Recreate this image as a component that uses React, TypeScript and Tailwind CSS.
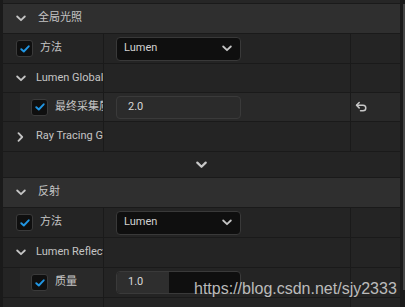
import React from "react";

const font = { fontFamily: 'Roboto, "Noto Sans CJK SC", "Noto Sans", sans-serif' };

function ChevronDown({ className = "" }: { className?: string }) {
  return (
    <svg width="10" height="7" viewBox="0 0 10 7" className={`shrink-0 ${className}`}>
      <path d="M1.2 1.5 L5 5.2 L8.8 1.5" fill="none" stroke="#c4c4c4" strokeWidth="1.8" strokeLinecap="round" strokeLinejoin="round" />
    </svg>
  );
}

function ChevronRight() {
  return (
    <svg width="7" height="10" viewBox="0 0 7 10" className="shrink-0">
      <path d="M1.5 1.2 L5.2 5 L1.5 8.8" fill="none" stroke="#c4c4c4" strokeWidth="1.8" strokeLinecap="round" strokeLinejoin="round" />
    </svg>
  );
}

function Checkbox() {
  return (
    <div className="flex h-[17px] w-[17px] shrink-0 items-center justify-center rounded-[3px] border border-[#3a3a3a] bg-[#0f0f0f]">
      <svg width="10" height="8" viewBox="0 0 10 8" className="shrink-0">
        <path d="M1.3 4.2 L3.8 6.5 L8.7 1.3" fill="none" stroke="#2196e3" strokeWidth="1.9" strokeLinecap="round" strokeLinejoin="round" />
      </svg>
    </div>
  );
}

function Dropdown() {
  return (
    <div className="flex h-[24px] w-[125px] items-center justify-between rounded-[4px] border border-[#393939] bg-[#0f0f0f] pl-[7px] pr-[8px] text-[11px] text-[#d2d2d2]">
      <span>Lumen</span>
      <ChevronDown />
    </div>
  );
}

function Header({ label }: { label: string }) {
  return (
    <div className="flex h-[30px] shrink-0 items-center border-b border-[#1a1a1a] bg-[#2f2f2f] pl-[13px] text-[11px] text-[#c4c4c4]">
      <ChevronDown />
      <span className="ml-[12px]">{label}</span>
    </div>
  );
}

function Row({
  h = "h-[30px]",
  name,
  value,
  right,
  bg = "bg-[#242424]",
  valueBg = "bg-[#242424]",
}: {
  h?: string;
  name: React.ReactNode;
  value?: React.ReactNode;
  right?: React.ReactNode;
  bg?: string;
  valueBg?: string;
}) {
  return (
    <div className={`flex ${h} shrink-0 border-b border-[#1a1a1a]`}>
      <div className={`flex w-[101px] shrink-0 items-center overflow-hidden whitespace-nowrap border-r border-[#1a1a1a] ${bg} text-[11px] text-[#c4c4c4]`}>
        {name}
      </div>
      <div className={`flex w-[247px] shrink-0 items-center border-r border-[#1a1a1a] pl-[12px] ${valueBg}`}>{value}</div>
      <div className={`flex flex-1 items-center pl-[4px] ${valueBg}`}>{right}</div>
    </div>
  );
}

function RevertIcon() {
  return (
    <svg width="13" height="12" viewBox="0 0 13 12" className="shrink-0">
      <path d="M4.2 1.5 L1.5 4.2 L4.2 6.9" fill="none" stroke="#c8c8c8" strokeWidth="1.5" strokeLinecap="round" strokeLinejoin="round" />
      <path d="M1.8 4.2 H8 a2.8 2.8 0 0 1 0 5.6 H5.5" fill="none" stroke="#c8c8c8" strokeWidth="1.5" strokeLinecap="round" strokeLinejoin="round" />
    </svg>
  );
}

export default function App() {
  return (
    <div className="relative flex h-[307px] w-[405px] overflow-hidden bg-[#1a1a1a]" style={font}>
      <div className="flex w-[400px] flex-col pl-[3px]">
        <div className="h-[4px] shrink-0 border-b border-[#1a1a1a] bg-[#262626]" />
        <Header label="全局光照" />
        <Row
          name={
            <div className="flex shrink-0 items-center pl-[13px]">
              <Checkbox />
              <span className="ml-[7px]">方法</span>
            </div>
          }
          value={<Dropdown />}
        />
        <Row
          h="h-[29px]"
          name={
            <div className="flex shrink-0 items-center pl-[13px]">
              <ChevronDown />
              <span className="ml-[10px]">Lumen Global Illumination</span>
            </div>
          }
        />
        <Row
          h="h-[29px]"
          bg="bg-[#242424]"
          valueBg="bg-[#292929]"
          name={
            <div className="flex h-full w-full shrink-0 items-center">
              <div className="h-full w-[17px] shrink-0 bg-[#242424]" />
              <div className="flex h-full flex-1 shrink-0 items-center bg-[#292929] pl-[11px]">
                <Checkbox />
                <span className="ml-[7px]">最终采集质量</span>
              </div>
            </div>
          }
          value={
            <div className="flex h-[23px] w-[125px] items-center rounded-[4px] border border-[#3a3a3a] bg-[#2b2b2b] pl-[11px] text-[11px] text-[#d8d8d8]">
              2.0
            </div>
          }
          right={<RevertIcon />}
        />
        <Row
          name={
            <div className="flex shrink-0 items-center pl-[14px]">
              <ChevronRight />
              <span className="ml-[12px]">Ray Tracing GI</span>
            </div>
          }
        />
        <div className="flex h-[26px] shrink-0 items-center justify-center border-b border-[#1a1a1a] bg-[#242424]">
          <svg width="11" height="8" viewBox="0 0 11 8" className="shrink-0">
            <path d="M1.3 1.6 L5.5 5.8 L9.7 1.6" fill="none" stroke="#c8c8c8" strokeWidth="2.2" strokeLinecap="round" strokeLinejoin="round" />
          </svg>
        </div>
        <Header label="反射" />
        <Row
          name={
            <div className="flex shrink-0 items-center pl-[13px]">
              <Checkbox />
              <span className="ml-[7px]">方法</span>
            </div>
          }
          value={<Dropdown />}
        />
        <Row
          name={
            <div className="flex shrink-0 items-center pl-[13px]">
              <ChevronDown />
              <span className="ml-[10px]">Lumen Reflections</span>
            </div>
          }
        />
        <Row
          name={
            <div className="flex h-full w-full shrink-0 items-center">
              <div className="h-full w-[17px] shrink-0 bg-[#242424]" />
              <div className="flex h-full flex-1 shrink-0 items-center bg-[#292929] pl-[11px]">
                <Checkbox />
                <span className="ml-[7px]">质量</span>
              </div>
            </div>
          }
          value={
            <div className="flex h-[23px] w-[125px] overflow-hidden rounded-[4px] border border-[#3a3a3a] bg-[#0f0f0f] text-[11px] text-[#d8d8d8]">
              <div className="flex h-full w-[52px] items-center bg-[#2e2e2e] pl-[11px]">1.0</div>
            </div>
          }
        />
        <Row
          name={
            <div className="flex shrink-0 items-center pl-[14px]">
              <ChevronRight />
              <span className="ml-[12px]">Screen Space</span>
            </div>
          }
        />
      </div>
      <div className="flex w-[5px] flex-col bg-[#1a1a1a] pl-[3px] pt-[4px]">
        <div className="h-[286px] w-[2px] bg-[#454545]" />
      </div>
      <div
        className="absolute left-[194px] top-[277px] whitespace-nowrap text-[16px] text-[#d6d6d6]"
        style={{ fontFamily: '"Liberation Sans", Arial, sans-serif', opacity: 0.85 }}
      >
        https://blog.csdn.net/sjy2333
      </div>
    </div>
  );
}
